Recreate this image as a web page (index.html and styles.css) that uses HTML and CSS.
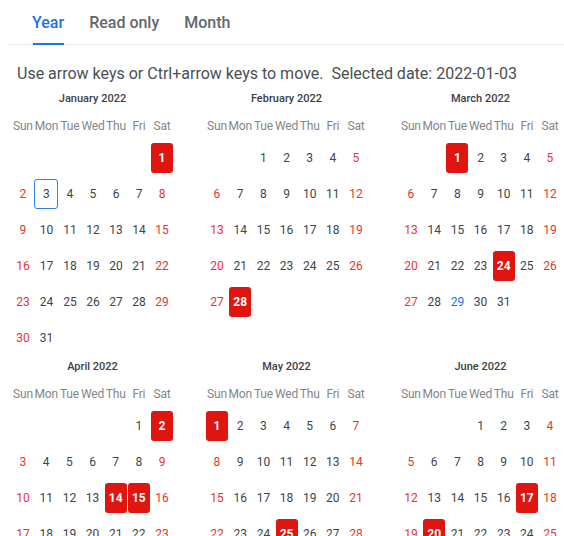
FILE: index.html
```html
<!DOCTYPE html>
<html lang="en">
<head>
<meta charset="utf-8">
<title>Year calendar</title>
<link rel="stylesheet" href="styles.css">
</head>
<body>
<nav class="tabs">
  <div class="tab active">Year</div>
  <div class="tab">Read only</div>
  <div class="tab">Month</div>
</nav>
<p class="hint">Use arrow keys or Ctrl+arrow keys to move.&nbsp; Selected date: 2022-01-03</p>
<div class="year">
  <section class="month">
    <h3>January 2022</h3>
    <div class="days">
      <span class="wd">Sun</span><span class="wd">Mon</span><span class="wd">Tue</span><span class="wd">Wed</span><span class="wd">Thu</span><span class="wd">Fri</span><span class="wd">Sat</span>
      <span></span><span></span><span></span><span></span><span></span><span></span><span class="d sel">1</span>
      <span class="d we">2</span><span class="d focus">3</span><span class="d">4</span><span class="d">5</span><span class="d">6</span><span class="d">7</span><span class="d we">8</span>
      <span class="d we">9</span><span class="d">10</span><span class="d">11</span><span class="d">12</span><span class="d">13</span><span class="d">14</span><span class="d we">15</span>
      <span class="d we">16</span><span class="d">17</span><span class="d">18</span><span class="d">19</span><span class="d">20</span><span class="d">21</span><span class="d we">22</span>
      <span class="d we">23</span><span class="d">24</span><span class="d">25</span><span class="d">26</span><span class="d">27</span><span class="d">28</span><span class="d we">29</span>
      <span class="d we">30</span><span class="d">31</span>
    </div>
  </section>
  <section class="month">
    <h3>February 2022</h3>
    <div class="days">
      <span class="wd">Sun</span><span class="wd">Mon</span><span class="wd">Tue</span><span class="wd">Wed</span><span class="wd">Thu</span><span class="wd">Fri</span><span class="wd">Sat</span>
      <span></span><span></span><span class="d">1</span><span class="d">2</span><span class="d">3</span><span class="d">4</span><span class="d we">5</span>
      <span class="d we">6</span><span class="d">7</span><span class="d">8</span><span class="d">9</span><span class="d">10</span><span class="d">11</span><span class="d we">12</span>
      <span class="d we">13</span><span class="d">14</span><span class="d">15</span><span class="d">16</span><span class="d">17</span><span class="d">18</span><span class="d we">19</span>
      <span class="d we">20</span><span class="d">21</span><span class="d">22</span><span class="d">23</span><span class="d">24</span><span class="d">25</span><span class="d we">26</span>
      <span class="d we">27</span><span class="d sel">28</span>
    </div>
  </section>
  <section class="month">
    <h3>March 2022</h3>
    <div class="days">
      <span class="wd">Sun</span><span class="wd">Mon</span><span class="wd">Tue</span><span class="wd">Wed</span><span class="wd">Thu</span><span class="wd">Fri</span><span class="wd">Sat</span>
      <span></span><span></span><span class="d sel">1</span><span class="d">2</span><span class="d">3</span><span class="d">4</span><span class="d we">5</span>
      <span class="d we">6</span><span class="d">7</span><span class="d">8</span><span class="d">9</span><span class="d">10</span><span class="d">11</span><span class="d we">12</span>
      <span class="d we">13</span><span class="d">14</span><span class="d">15</span><span class="d">16</span><span class="d">17</span><span class="d">18</span><span class="d we">19</span>
      <span class="d we">20</span><span class="d">21</span><span class="d">22</span><span class="d">23</span><span class="d sel">24</span><span class="d">25</span><span class="d we">26</span>
      <span class="d we">27</span><span class="d">28</span><span class="d today">29</span><span class="d">30</span><span class="d">31</span>
    </div>
  </section>
  <section class="month">
    <h3>April 2022</h3>
    <div class="days">
      <span class="wd">Sun</span><span class="wd">Mon</span><span class="wd">Tue</span><span class="wd">Wed</span><span class="wd">Thu</span><span class="wd">Fri</span><span class="wd">Sat</span>
      <span></span><span></span><span></span><span></span><span></span><span class="d">1</span><span class="d sel">2</span>
      <span class="d we">3</span><span class="d">4</span><span class="d">5</span><span class="d">6</span><span class="d">7</span><span class="d">8</span><span class="d we">9</span>
      <span class="d we">10</span><span class="d">11</span><span class="d">12</span><span class="d">13</span><span class="d sel">14</span><span class="d sel">15</span><span class="d we">16</span>
      <span class="d we">17</span><span class="d">18</span><span class="d">19</span><span class="d">20</span><span class="d">21</span><span class="d">22</span><span class="d we">23</span>
      <span class="d we">24</span><span class="d">25</span><span class="d">26</span><span class="d">27</span><span class="d">28</span><span class="d">29</span><span class="d we">30</span>
    </div>
  </section>
  <section class="month">
    <h3>May 2022</h3>
    <div class="days">
      <span class="wd">Sun</span><span class="wd">Mon</span><span class="wd">Tue</span><span class="wd">Wed</span><span class="wd">Thu</span><span class="wd">Fri</span><span class="wd">Sat</span>
      <span class="d sel">1</span><span class="d">2</span><span class="d">3</span><span class="d">4</span><span class="d">5</span><span class="d">6</span><span class="d we">7</span>
      <span class="d we">8</span><span class="d">9</span><span class="d">10</span><span class="d">11</span><span class="d">12</span><span class="d">13</span><span class="d we">14</span>
      <span class="d we">15</span><span class="d">16</span><span class="d">17</span><span class="d">18</span><span class="d">19</span><span class="d">20</span><span class="d we">21</span>
      <span class="d we">22</span><span class="d">23</span><span class="d">24</span><span class="d sel">25</span><span class="d">26</span><span class="d">27</span><span class="d we">28</span>
      <span class="d we">29</span><span class="d">30</span><span class="d">31</span>
    </div>
  </section>
  <section class="month">
    <h3>June 2022</h3>
    <div class="days">
      <span class="wd">Sun</span><span class="wd">Mon</span><span class="wd">Tue</span><span class="wd">Wed</span><span class="wd">Thu</span><span class="wd">Fri</span><span class="wd">Sat</span>
      <span></span><span></span><span></span><span class="d">1</span><span class="d">2</span><span class="d">3</span><span class="d we">4</span>
      <span class="d we">5</span><span class="d">6</span><span class="d">7</span><span class="d">8</span><span class="d">9</span><span class="d">10</span><span class="d we">11</span>
      <span class="d we">12</span><span class="d">13</span><span class="d">14</span><span class="d">15</span><span class="d">16</span><span class="d sel">17</span><span class="d we">18</span>
      <span class="d we">19</span><span class="d sel">20</span><span class="d">21</span><span class="d">22</span><span class="d">23</span><span class="d">24</span><span class="d we">25</span>
      <span class="d we">26</span><span class="d">27</span><span class="d">28</span><span class="d">29</span><span class="d">30</span>
    </div>
  </section>
</div>
</body>
</html>
```

FILE: styles.css
```css
html, body {
  margin: 0;
  padding: 0;
  background: #ffffff;
  overflow: hidden;
}

body {
  font-family: Roboto, "Liberation Sans", Arial, sans-serif;
  color: #3c4043;
}

.tabs {
  display: flex;
  gap: 25px;
  margin-left: 8px;
  padding-left: 24px;
  border-bottom: 1px solid #e6e8eb;
  box-sizing: border-box;
  height: 45px;
}

.tab {
  position: relative;
  font-size: 16px;
  font-weight: 500;
  line-height: 20px;
  padding-top: 13px;
  color: #63676c;
}

.tab.active {
  color: #1a73e8;
}

.tab.active::after {
  content: "";
  position: absolute;
  left: 1px;
  right: 0;
  bottom: -1px;
  height: 2px;
  background: #1a73e8;
}

.hint {
  margin: 18px 0 0 17px;
  font-size: 16px;
  line-height: 21px;
  color: #4a4f55;
  white-space: nowrap;
}

.year {
  display: grid;
  grid-template-columns: repeat(3, 162.2px);
  column-gap: 31.8px;
  row-gap: 3px;
  margin: 7px 0 0 11.4px;
}

.month h3 {
  margin: 0 0 11px;
  font-size: 11px;
  font-weight: 500;
  line-height: 16px;
  text-align: center;
  color: #3c4043;
}

.days {
  display: grid;
  grid-template-columns: repeat(7, 1fr);
  grid-template-rows: 22px repeat(6, 36px);
  font-size: 12px;
}

.wd {
  align-self: start;
  line-height: 16px;
  text-align: center;
  color: #80868b;
  white-space: nowrap;
  letter-spacing: -0.2px;
}

.d {
  align-self: center;
  justify-self: center;
  width: 22px;
  height: 30px;
  line-height: 30px;
  text-align: center;
  border-radius: 3px;
  color: #40454c;
  box-sizing: border-box;
}

.d.we {
  color: #e8342c;
}

.d.today {
  color: #1a73e8;
}

.d.focus {
  width: 24px;
  border: 1px solid #2d7fe9;
  line-height: 28px;
}

.d.sel {
  background: #e0150f;
  color: #ffffff;
  font-weight: 700;
}
```
